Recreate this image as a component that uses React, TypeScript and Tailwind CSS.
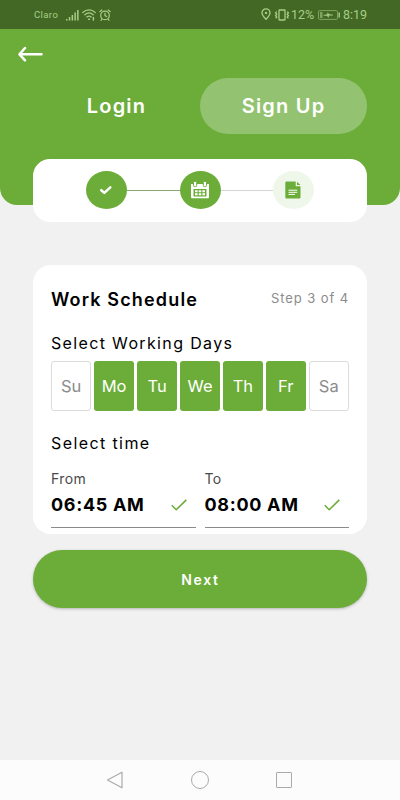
import clsx from "clsx";
import type { ReactNode } from "react";

interface Day {
  label: string;
  selected: boolean;
}

const DAYS: Day[] = [
  { label: "Su", selected: false },
  { label: "Mo", selected: true },
  { label: "Tu", selected: true },
  { label: "We", selected: true },
  { label: "Th", selected: true },
  { label: "Fr", selected: true },
  { label: "Sa", selected: false },
];

const StatusBar = () => (
  <div className="flex h-[29px] shrink-0 items-center bg-[#436826] pl-[34px] font-['Roboto',sans-serif] text-[#a5cf85]">
    <span className="w-[32px] pt-px text-[9.5px] tracking-[0.4px]">Claro</span>
    <svg className="h-3 w-[13px]" viewBox="0 0 13 12" fill="currentColor">
      <path d="M0 10h1.5v1.6H0zM2.8 8h1.5v3.6H2.8zM5.6 6h1.5v5.6H5.6zM8.4 3.5h1.5v8.1H8.4zM11.1 1h1.5v10.6h-1.5z" />
    </svg>
    <svg
      className="ml-[3px] h-[13px] w-[14px]"
      viewBox="0 0 14 13"
      fill="none"
      stroke="currentColor"
      strokeWidth="1.2"
      strokeLinecap="round"
    >
      <path d="M.8 4.5C4.4 1.1 9.6 1.1 13.2 4.5M2.8 6.8c2.5-2.2 5.9-2.2 8.4 0M4.8 9c1.4-1.1 3-1.1 4.4 0" />
      <path d="M6.6 11.2h.8M11.4 9.4v2.5" strokeWidth="1.5" />
    </svg>
    <svg
      className="ml-[3px] h-3 w-3"
      viewBox="0 0 12 12"
      fill="none"
      stroke="currentColor"
      strokeWidth="1.2"
      strokeLinecap="round"
    >
      <circle cx="6" cy="6.4" r="4.3" />
      <path d="M6 4v2.6l1.6 1M.8 2.7 2.8 1M11.2 2.7 9.2 1M3 10 2 11.3M9 10l1 1.3" />
    </svg>
    <svg
      className="ml-[150px] h-[13px] w-[10px]"
      viewBox="0 0 10 13"
      fill="none"
      stroke="currentColor"
      strokeWidth="1.3"
    >
      <path d="M5 11.3C2.7 8.8 1 6.9 1 4.9a4 4 0 0 1 8 0c0 2-1.7 3.9-4 6.4Z" />
      <circle cx="5" cy="4.9" r="1.2" fill="currentColor" stroke="none" />
    </svg>
    <svg
      className="ml-[3px] h-3 w-[16px]"
      viewBox="0 0 16 12"
      fill="none"
      stroke="currentColor"
      strokeWidth="1.3"
    >
      <rect x="5" y="1" width="6" height="10" rx=".5" />
      <path d="M2.8 2.6 1.6 3.8l1.2 1.4-1.2 1.4 1.2 1.4-1.2 1.4M13.2 2.6l1.2 1.2-1.2 1.4 1.2 1.4L13.2 8l1.2 1.4" />
    </svg>
    <span className="ml-px w-[27px] pt-px text-[12.5px]">12%</span>
    <svg className="h-[10px] w-[22px]" viewBox="0 0 22 10" fill="none">
      <rect x=".5" y=".6" width="19" height="8.8" rx="1.3" stroke="#7da55e" />
      <path d="M2 2h2.5v6H2z" fill="#7da55e" />
      <path d="M20.5 2.5h1.4v5h-1.4z" fill="currentColor" />
      <path
        d="M5.5 5.2 9.5 4.4V2.8l2 1.6 3.5.6-4.3.6v1.7L9 5.8z"
        fill="currentColor"
        stroke="currentColor"
        strokeWidth=".4"
      />
    </svg>
    <span className="ml-[3px] pt-px text-[12.5px]">8:19</span>
  </div>
);

const StepBadge = (props: { muted?: boolean; children: ReactNode }) => (
  <div
    className={clsx(
      "flex h-[38px] w-[41px] shrink-0 items-center justify-center rounded-[50%]",
      props.muted ? "bg-[#eff7eb]" : "bg-[#6cad39]"
    )}
  >
    {props.children}
  </div>
);

const Stepper = () => (
  <div className="mx-[33px] -mt-[46px] flex h-[63px] shrink-0 items-center justify-center rounded-[17px] bg-white pr-px pb-px">
    <StepBadge>
      <svg
        className="h-[10px] w-[14px]"
        viewBox="0 0 14 10"
        fill="none"
        stroke="white"
        strokeWidth="2.5"
        strokeLinecap="round"
        strokeLinejoin="round"
      >
        <path d="m2.3 5.2 3 2.7 6-5.6" />
      </svg>
    </StepBadge>
    <div className="h-px w-[53px] bg-[#8ba775]" />
    <StepBadge>
      <svg className="-ml-px h-[18px] w-[18px]" viewBox="0 0 18 18">
        <path
          d="M0 3h18v13.2a1 1 0 0 1-1 1H1a1 1 0 0 1-1-1Z"
          fill="white"
        />
        <g fill="white" stroke="#6cad39" strokeWidth="1">
          <rect x="2.5" y=".4" width="3.2" height="5.2" rx="1.2" />
          <rect x="12.300" y=".4" width="3.2" height="5.2" rx="1.2" />
        </g>
        <rect x="2.5" y="8" width="13" height="7.500" rx=".6" fill="#6cad39" />
        <g fill="white">
          <path d="M4 9.200h2.600v2H4zM7.700 9.200h2.600v2H7.700zM11.400 9.200H14v2h-2.600z" />
          <path d="M4 12.300h2.600v2H4zM7.700 12.300h2.600v2H7.700zM11.400 12.300H14v2h-2.600z" />
        </g>
      </svg>
    </StepBadge>
    <div className="h-px w-[52px] bg-[#d3d5d2]" />
    <StepBadge muted>
      <svg className="h-[18px] w-4" viewBox="0 0 16 18">
        <path
          d="M1.500.6h9.200v4.600h4.800v11a1.200 1.200 0 0 1-1.200 1.200H1.500A1.200 1.200 0 0 1 .3 16.200V1.800A1.200 1.200 0 0 1 1.500.6Z"
          fill="#6cad39"
        />
        <path d="M12 .8 15.400 4H12z" fill="#6cad39" />
        <path
          d="M3.500 9.200h8.800M3.500 11.300h8.800M3.500 13.400h6.500"
          stroke="white"
          strokeWidth="1"
        />
      </svg>
    </StepBadge>
  </div>
);

const TimeField = (props: { label: string; value: string }) => (
  <div className="h-[58px] flex-1 border-b border-[#8a8a8a]">
    <div className="text-[14px] leading-[18px] tracking-[0.4px] text-[#4a4a4a]">
      {props.label}
    </div>
    <div className="flex items-center justify-between pr-[9px]">
      <span className="text-[18px] leading-[33px] font-bold tracking-[0.7px]">
        {props.value}
      </span>
      <svg
        className="h-3 w-4"
        viewBox="0 0 16 12"
        fill="none"
        stroke="#6cad39"
        strokeWidth="1.6"
      >
        <path d="m.8 6.300 4.400 4.400L15.300.900" />
      </svg>
    </div>
  </div>
);

const WorkSchedule = () => (
  <section className="mx-[33px] mt-[43px] h-[269px] shrink-0 rounded-[18px] bg-white px-[18px] pt-[22px] text-black">
    <div className="flex h-[24px] items-center justify-between">
      <h1 className="text-[18px] font-semibold tracking-[1.15px]">
        Work Schedule
      </h1>
      <span className="text-[13px] tracking-[0.9px] text-[#8c8c8c]">
        Step 3 of 4
      </span>
    </div>
    <h2 className="mt-[20px] text-[16px] leading-[24px] tracking-[1.35px]">
      Select Working Days
    </h2>
    <div className="mt-[6px] grid h-[50px] grid-cols-7 gap-[2.5px]">
      {DAYS.map((day) => (
        <button
          key={day.label}
          className={clsx(
            "rounded-[3px] text-[16.5px]",
            day.selected
              ? "bg-[#6cad39] text-white"
              : "border border-[#dcdcdc] bg-white text-[#8c8c8c]"
          )}
        >
          {day.label}
        </button>
      ))}
    </div>
    <h2 className="mt-[20px] text-[16px] leading-[24px] tracking-[1.4px]">
      Select time
    </h2>
    <div className="mt-[15px] flex gap-[9px]">
      <TimeField label="From" value="06:45 AM" />
      <TimeField label="To" value="08:00 AM" />
    </div>
  </section>
);

const NavigationBar = () => (
  <div className="mt-auto flex h-[40px] shrink-0 items-center justify-center gap-[67px] bg-[#fcfcfc] pr-[2px]">
    <svg
      className="h-[18px] w-[18px]"
      viewBox="0 0 18 18"
      fill="none"
      stroke="#ababab"
      strokeWidth="1.200"
      strokeLinejoin="round"
    >
      <path d="M1.500 9 16 1.200v15.600z" />
    </svg>
    <div className="h-[18px] w-[18px] rounded-full border border-[#ababab]" />
    <div className="h-4 w-4 rounded-[1px] border border-[#ababab]" />
  </div>
);

const App = () => {
  return (
    <div className="flex h-[800px] w-[400px] flex-col overflow-hidden bg-[#f1f1f1] font-['Inter',sans-serif]">
      <StatusBar />
      <header className="h-[176px] shrink-0 rounded-b-[17px] bg-[#6cad39] px-[33px] text-white">
        <button className="mt-[17px] -ml-[16px] block h-4 w-[26px]">
          <svg
            className="h-4 w-[26px]"
            viewBox="0 0 26 16"
            fill="none"
            stroke="currentColor"
            strokeWidth="2.500"
            strokeLinecap="round"
            strokeLinejoin="round"
          >
            <path d="M8 2 2.500 8.300l5.500 6M3 8.300h21.500" />
          </svg>
        </button>
        <div className="mt-[16px] grid h-[56px] grid-cols-2 text-[20px] font-semibold tracking-[1.2px]">
          <button>Login</button>
          <button className="rounded-full bg-[#93c370]">Sign Up</button>
        </div>
      </header>
      <Stepper />
      <WorkSchedule />
      <button className="mx-[33px] mt-[16px] h-[58px] shrink-0 rounded-full bg-[#6cad39] pl-px text-[14px] font-semibold tracking-[1.700px] text-white shadow-[0_1px_3px_rgba(0,0,0,0.25)]">
        Next
      </button>
      <NavigationBar />
    </div>
  );
};

export default App;
